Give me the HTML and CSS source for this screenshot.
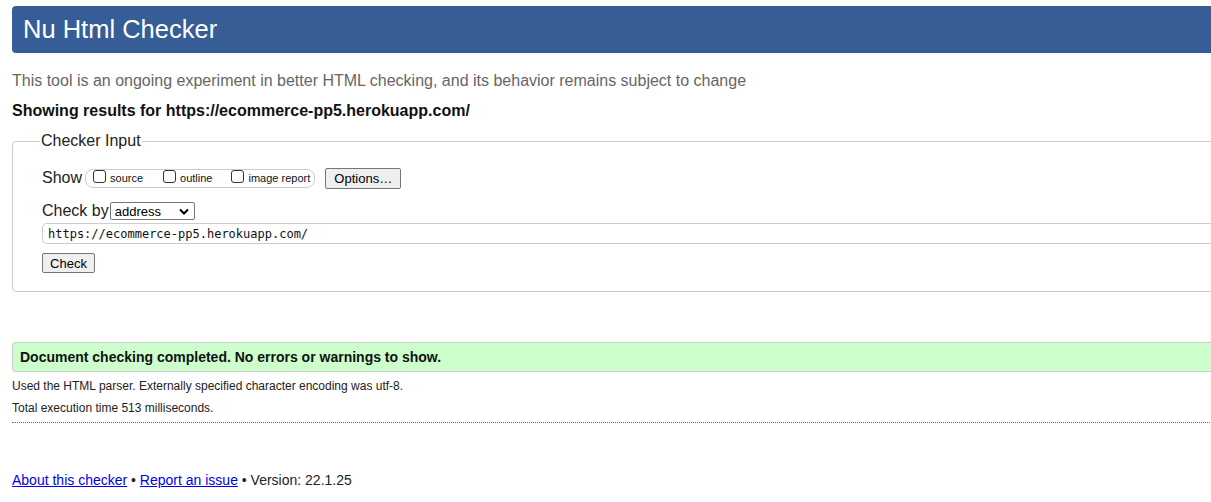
FILE: index.html
```html
<!DOCTYPE html>
<html lang="en">
<head>
<meta charset="utf-8">
<title>Nu Html Checker</title>
<link rel="stylesheet" href="styles.css">
</head>
<body>
<div class="page">
  <h1 class="title">Nu Html Checker</h1>
  <p class="tagline">This tool is an ongoing experiment in better HTML checking, and its behavior remains subject to change</p>
  <p class="showing">Showing results for https://ecommerce-pp5.herokuapp.com/</p>
  <fieldset class="input-box">
    <legend class="legend">Checker Input</legend>
    <div class="row show-row">
      <span class="label">Show</span>
      <span class="group">
        <label class="opt opt-source"><span class="cb"></span>source</label>
        <label class="opt opt-outline"><span class="cb"></span>outline</label>
        <label class="opt"><span class="cb"></span>image report</label>
      </span>
      <button class="btn btn-options" type="button">Options…</button>
    </div>
    <div class="row by-row">
      <span class="label">Check by</span>
      <span class="select">address<svg class="chev" width="10" height="7" viewBox="0 0 10 7"><path d="M1 1.5 L5 5.5 L9 1.5" fill="none" stroke="#000" stroke-width="2"/></svg></span>
    </div>
    <div class="url">https://ecommerce-pp5.herokuapp.com/</div>
    <button class="btn btn-check" type="button">Check</button>
  </fieldset>
  <div class="success">Document checking completed. No errors or warnings to show.</div>
  <p class="info">Used the HTML parser. Externally specified character encoding was utf-8.</p>
  <p class="info">Total execution time 513 milliseconds.</p>
  <hr class="sep">
  <p class="footer"><a href="#">About this checker</a> • <a href="#">Report an issue</a> • Version: 22.1.25</p>
</div>
</body>
</html>
```
FILE: styles.css
```css
html { overflow: hidden; }
body {
  margin: 0;
  background: #fff;
  font-family: "Liberation Sans", Arial, sans-serif;
  color: #111;
}
.page {
  width: 1260px;
  padding: 6px 0 0 12px;
}
.title {
  margin: 0;
  height: 47px;
  box-sizing: border-box;
  background: #365d95;
  color: #fff;
  font-weight: normal;
  font-size: 25.5px;
  line-height: 47px;
  padding-left: 11px;
  border-radius: 4px 0 0 4px;
}
.tagline {
  margin: 18px 0 0;
  font-size: 16px;
  line-height: 20px;
  color: #666;
}
.showing {
  margin: 10px 0 0;
  font-size: 16px;
  line-height: 20px;
  font-weight: bold;
}
.input-box {
  margin: 11px 0 0;
  border: 1px solid #ccc;
  border-radius: 4px 0 0 4px;
  padding: 10px 29px 18px;
}
.legend {
  font-size: 16px;
  padding: 0 1px;
  margin-left: -2px;
  color: #222;
}
.row {
  display: flex;
  align-items: center;
}
.label {
  font-size: 16px;
  color: #222;
}
.show-row { margin-top: 8px; height: 20px; }
.group {
  display: inline-flex;
  align-items: center;
  margin-left: 3px;
  height: 17px;
  border: 1px solid #ccc;
  border-radius: 8px;
  padding: 0 4px 0 7px;
  font-size: 11px;
}
.opt {
  display: inline-flex;
  align-items: center;
  color: #111;
}
.opt-source { margin-right: 20px; }
.opt-outline { margin-right: 19px; }
.cb {
  width: 11px;
  height: 11px;
  border: 1px solid #333;
  border-radius: 3px;
  margin-right: 4px;
  margin-top: -3px;
  box-sizing: content-box;
}
.btn {
  font-family: "Liberation Sans", Arial, sans-serif;
  font-size: 13px;
  background: #efefef;
  border: 1px solid #767676;
  border-radius: 2px;
  color: #000;
  padding: 0 6px;
  height: 21px;
}
.btn-options { margin-left: 10px; width: 76px; }
.by-row { margin-top: 13px; height: 20px; }
.select {
  display: inline-flex;
  align-items: center;
  justify-content: space-between;
  margin-left: 1px;
  width: 85px;
  height: 18px;
  box-sizing: border-box;
  border: 1px solid #767676;
  border-radius: 2px;
  font-size: 13px;
  padding: 0 5px 0 4px;
  color: #000;
}
.url {
  margin-top: 2px;
  height: 21px;
  box-sizing: border-box;
  border: 1px solid #ccc;
  border-right: none;
  border-radius: 5px 0 0 5px;
  font-family: "DejaVu Sans Mono", "Liberation Mono", monospace;
  font-size: 12px;
  line-height: 21px;
  padding-left: 5px;
  color: #111;
}
.btn-check {
  display: block;
  margin-top: 9px;
  width: 53px;
  height: 20px;
}
.success {
  margin-top: 50px;
  height: 30px;
  box-sizing: border-box;
  background: #ccffcc;
  border: 1px solid #ccc;
  border-right: none;
  border-radius: 4px 0 0 4px;
  font-size: 14px;
  font-weight: bold;
  line-height: 28px;
  padding-left: 7px;
  color: #111;
}
.info {
  margin: 6px 0 0;
  font-size: 12px;
  line-height: 16px;
  color: #222;
}
.sep {
  margin: 6px 0 0;
  border: none;
  border-top: 1px dotted #666;
}
.footer {
  margin: 49px 0 0;
  font-size: 14px;
  color: #222;
}
.footer a { color: #00e; }
```
